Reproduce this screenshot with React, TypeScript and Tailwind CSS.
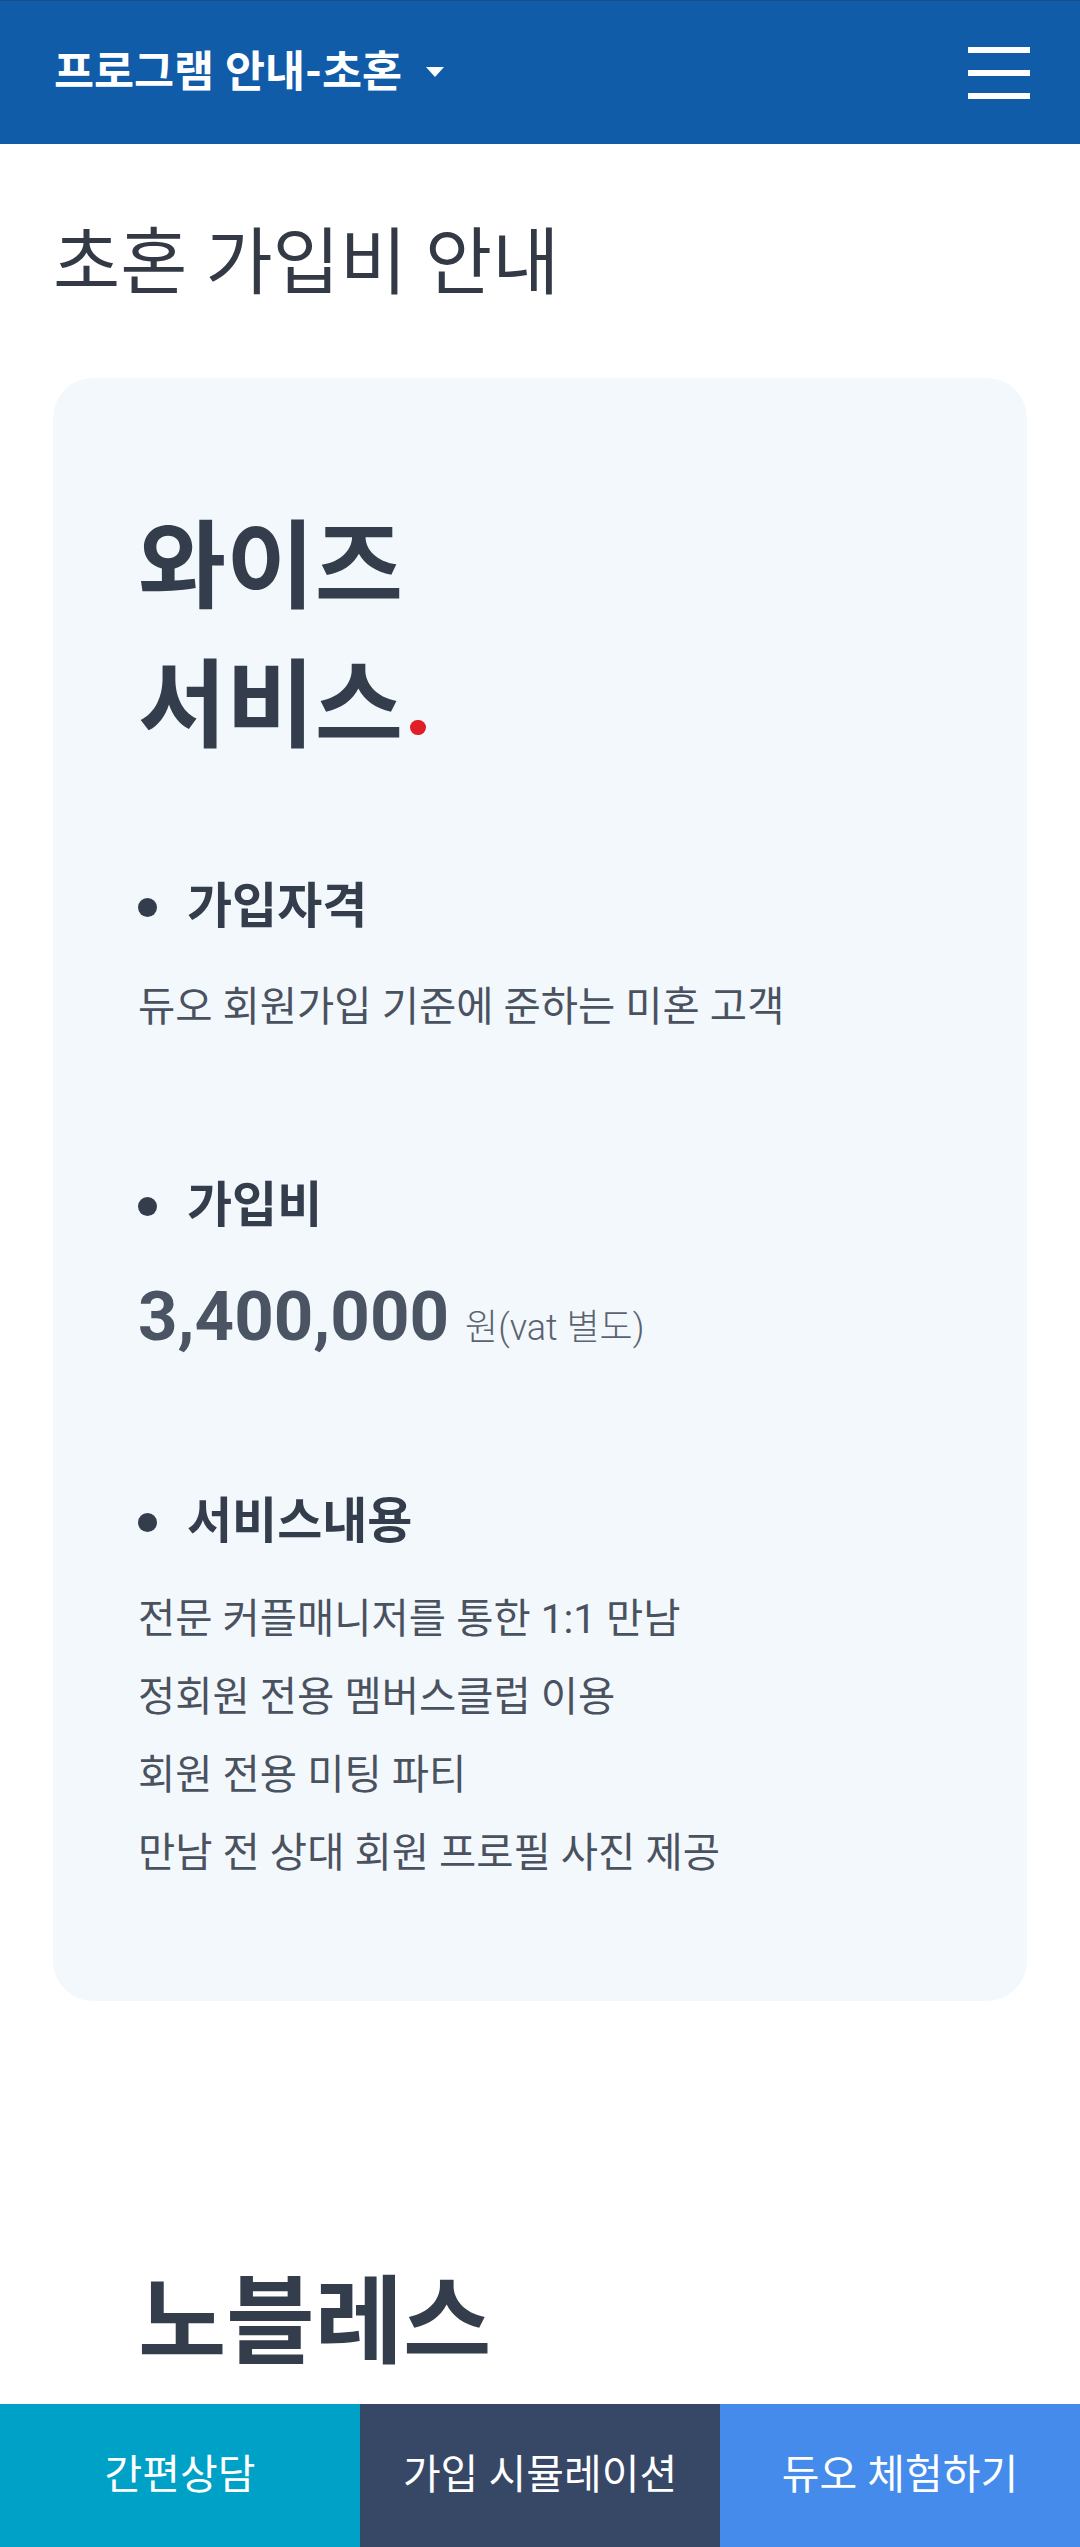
const SERVICE_ITEMS = [
  '전문 커플매니저를 통한 1:1 만남',
  '정회원 전용 멤버스클럽 이용',
  '회원 전용 미팅 파티',
  '만남 전 상대 회원 프로필 사진 제공',
];

function Bullet({ children }: { children: React.ReactNode }) {
  return (
    <h3 className="flex items-center gap-[30px] text-[49px] font-bold leading-[60px] text-[#343d4b]">
      <span className="h-[19px] w-[19px] shrink-0 rounded-full bg-[#343d4b]" />
      {children}
    </h3>
  );
}

export default function App() {
  return (
    <div className="min-h-screen bg-white pb-[144px] font-['Roboto','Noto_Sans_CJK_KR',sans-serif]">
      {/* top bar */}
      <header className="flex h-[144px] items-center justify-between border-t border-[#1b4e86] bg-[#115ca9] pl-[54px] pr-[50px]">
        <button type="button" className="flex items-center gap-[24px] text-[43.5px] font-bold text-white">
          프로그램 안내-초혼
          <svg width="18" height="10" viewBox="0 0 18 10" className="mt-[-2px]">
            <path d="M0 0h18L9 10z" fill="#fff" />
          </svg>
        </button>
        <button type="button" className="flex w-[62px] flex-col gap-[17px]">
          <span className="h-[6px] w-full bg-white" />
          <span className="h-[6px] w-full bg-white" />
          <span className="h-[6px] w-full bg-white" />
        </button>
      </header>

      <main className="px-[53px]">
        <h1 className="mt-[74px] text-[73px] font-normal leading-[90px] text-[#333a45]">초혼 가입비 안내</h1>

        <section className="mt-[70px] rounded-[40px] bg-[#f3f8fd] px-[85px] pb-[109px] pt-[120px]">
          <h2 className="text-[96px] font-bold leading-[139px] text-[#343d4b]">
            와이즈
            <br />
            서비스
            <span className="mb-[4px] ml-[7px] inline-block h-[15px] w-[16px] rounded-full bg-[#e11d26]" />
          </h2>

          <div className="mt-[101px]">
            <Bullet>가입자격</Bullet>
            <p className="mt-[42px] text-[40.5px] leading-[56px] text-[#4a5260]">듀오 회원가입 기준에 준하는 미혼 고객</p>
          </div>

          <div className="mt-[141px]">
            <Bullet>가입비</Bullet>
            <p className="mt-[41px] flex items-baseline gap-[16px] leading-[80px]">
              <span className="text-[69px] font-bold text-[#4a5462]">3,400,000</span>
              <span className="text-[36px] font-light text-[#5b6370]">원(vat 별도)</span>
            </p>
          </div>

          <div className="mt-[124px]">
            <Bullet>서비스내용</Bullet>
            <ul className="mt-[28px]">
              {SERVICE_ITEMS.map((item) => (
                <li key={item} className="text-[40.5px] leading-[78px] text-[#4a5260]">
                  {item}
                </li>
              ))}
            </ul>
          </div>
        </section>

        <section className="mt-[132px] rounded-[40px] bg-white px-[85px] pb-[109px] pt-[120px]">
          <h2 className="text-[96px] font-bold leading-[139px] text-[#343d4b]">노블레스</h2>
        </section>
      </main>

      {/* bottom actions */}
      <nav className="fixed inset-x-0 bottom-0 grid h-[143px] grid-cols-3 text-[41px] text-white">
        <a href="#" className="flex items-center justify-center bg-[#00a1c6]">간편상담</a>
        <a href="#" className="flex items-center justify-center bg-[#374866]">가입 시뮬레이션</a>
        <a href="#" className="flex items-center justify-center bg-[#448bec]">듀오 체험하기</a>
      </nav>
    </div>
  );
}
